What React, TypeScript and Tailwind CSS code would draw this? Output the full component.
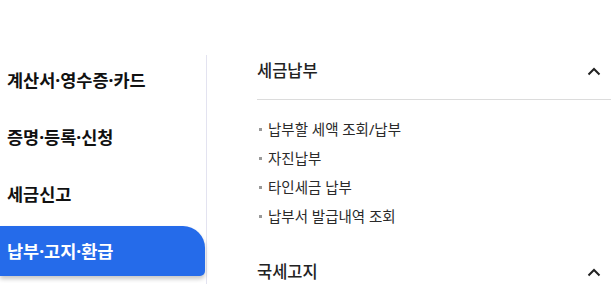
const navItems = ["계산서·영수증·카드", "증명·등록·신청", "세금신고", "납부·고지·환급"];
const payItems = ["납부할 세액 조회/납부", "자진납부", "타인세금 납부", "납부서 발급내역 조회"];

function Chevron() {
    return (
        <svg width="14" height="9" viewBox="0 0 14 9" className="shrink-0">
            <polyline points="1.5,7.5 7,2 12.5,7.5" fill="none" stroke="#222" strokeWidth="2" />
        </svg>
    );
}

export default function App() {
    return (
        <div
            className="w-[611px] h-[284px] overflow-hidden bg-white flex pt-[55px]"
            style={{ fontFamily: '"Noto Sans", "Noto Sans CJK KR", sans-serif' }}
        >
            <div className="w-[207px] shrink-0 border-r border-[#e3e3f0] flex flex-col gap-[7px] pr-[1px]">
                {navItems.map((label, i) => {
                    const active = i === navItems.length - 1;
                    return (
                        <div
                            key={label}
                            className={
                                active
                                    ? "h-[50px] flex items-center pl-[7px] text-[17.5px] font-bold text-white bg-[#256bea] rounded-tr-[22px] rounded-br-[5px] shadow-[0_3px_4px_rgba(0,0,0,0.22)]"
                                    : "h-[50px] flex items-center pl-[7px] text-[17.5px] font-bold text-[#111]"
                            }
                        >
                            {label}
                        </div>
                    );
                })}
            </div>

            <div className="flex-1 pl-[50px]">
                <div className="flex items-center justify-between h-[32px] pr-[10px] text-[16.5px] font-medium text-[#222]">
                    <span>세금납부</span>
                    <Chevron />
                </div>
                <div className="mt-[12px] border-t border-[#dcdcdc]" />
                <ul className="mt-[15px] flex flex-col">
                    {payItems.map((t) => (
                        <li key={t} className="h-[29px] flex items-center text-[14.5px] text-[#2a2a2a]">
                            <span className="w-[3px] h-[3px] bg-[#999] ml-[2px] mr-[6px] shrink-0" />
                            {t}
                        </li>
                    ))}
                </ul>
                <div className="mt-[25px] flex items-center justify-between h-[32px] pr-[10px] text-[16.5px] font-medium text-[#222]">
                    <span>국세고지</span>
                    <Chevron />
                </div>
            </div>
        </div>
    );
}
